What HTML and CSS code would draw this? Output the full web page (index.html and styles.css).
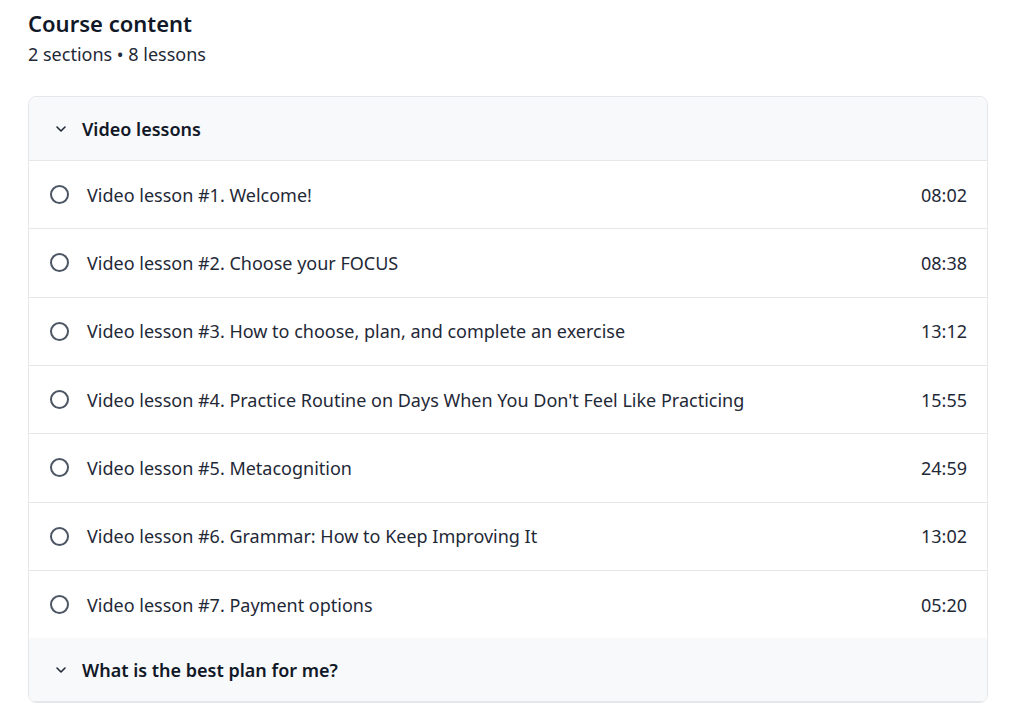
FILE: index.html
```html
<!DOCTYPE html>
<html>
<head>
<meta charset="utf-8">
<link rel="stylesheet" href="styles.css">
</head>
<body>
<div class="page">
  <h1 class="title">Course content</h1>
  <p class="meta">2 sections • 8 lessons</p>
  <div class="card">
    <div class="section-head">
      <svg class="chev" width="14" height="14" viewBox="0 0 14 14"><path d="M3 5l4 4 4-4" fill="none" stroke="#1f2937" stroke-width="1.6" stroke-linecap="round" stroke-linejoin="round"/></svg>
      <span>Video lessons</span>
    </div>
    <div class="lesson"><span class="circle"></span><span class="name">Video lesson #1. Welcome!</span><span class="time">08:02</span></div>
    <div class="lesson"><span class="circle"></span><span class="name">Video lesson #2. Choose your FOCUS</span><span class="time">08:38</span></div>
    <div class="lesson"><span class="circle"></span><span class="name">Video lesson #3. How to choose, plan, and complete an exercise</span><span class="time">13:12</span></div>
    <div class="lesson"><span class="circle"></span><span class="name">Video lesson #4. Practice Routine on Days When You Don't Feel Like Practicing</span><span class="time">15:55</span></div>
    <div class="lesson"><span class="circle"></span><span class="name">Video lesson #5. Metacognition</span><span class="time">24:59</span></div>
    <div class="lesson"><span class="circle"></span><span class="name">Video lesson #6. Grammar: How to Keep Improving It</span><span class="time">13:02</span></div>
    <div class="lesson last"><span class="circle"></span><span class="name">Video lesson #7. Payment options</span><span class="time">05:20</span></div>
    <div class="section-head second">
      <svg class="chev" width="14" height="14" viewBox="0 0 14 14"><path d="M3 5l4 4 4-4" fill="none" stroke="#1f2937" stroke-width="1.6" stroke-linecap="round" stroke-linejoin="round"/></svg>
      <span>What is the best plan for me?</span>
    </div>
  </div>
</div>
</body>
</html>
```
FILE: styles.css
```css
html, body { margin: 0; padding: 0; background: #fff; }
body { font-family: "Noto Sans", "Open Sans", sans-serif; color: #1f2937; }
.page { padding: 8px 27px 0 28px; }
.title { margin: 0; font-size: 22px; font-weight: 600; line-height: 30px; color: #111827; }
.meta { margin: 3px 0 0; font-size: 18px; line-height: 26px; color: #1f2937; }
.card { margin-top: 29px; border: 1px solid #e5e7eb; border-radius: 8px; overflow: hidden; }
.section-head { display: flex; align-items: center; gap: 14px; height: 64px; padding: 0 20px 0 25px; background: #f8f9fb; border-bottom: 1px solid #e5e7eb; font-size: 18px; font-weight: 600; color: #111827; box-sizing: border-box; }
.section-head.second { height: 64px; }
.chev { flex: none; }
.lesson { display: flex; align-items: center; height: 68.33px; box-sizing: border-box; padding: 0 20px 0 21px; border-bottom: 1px solid #e5e7eb; font-size: 18px; background: #fff; }
.lesson.last { border-bottom: none; height: 67.33px; }
.circle { flex: none; width: 15px; height: 15px; border: 2px solid #4b5563; border-radius: 50%; margin-right: 18px; }
.name { flex: 1; }
.time { flex: none; }
```
